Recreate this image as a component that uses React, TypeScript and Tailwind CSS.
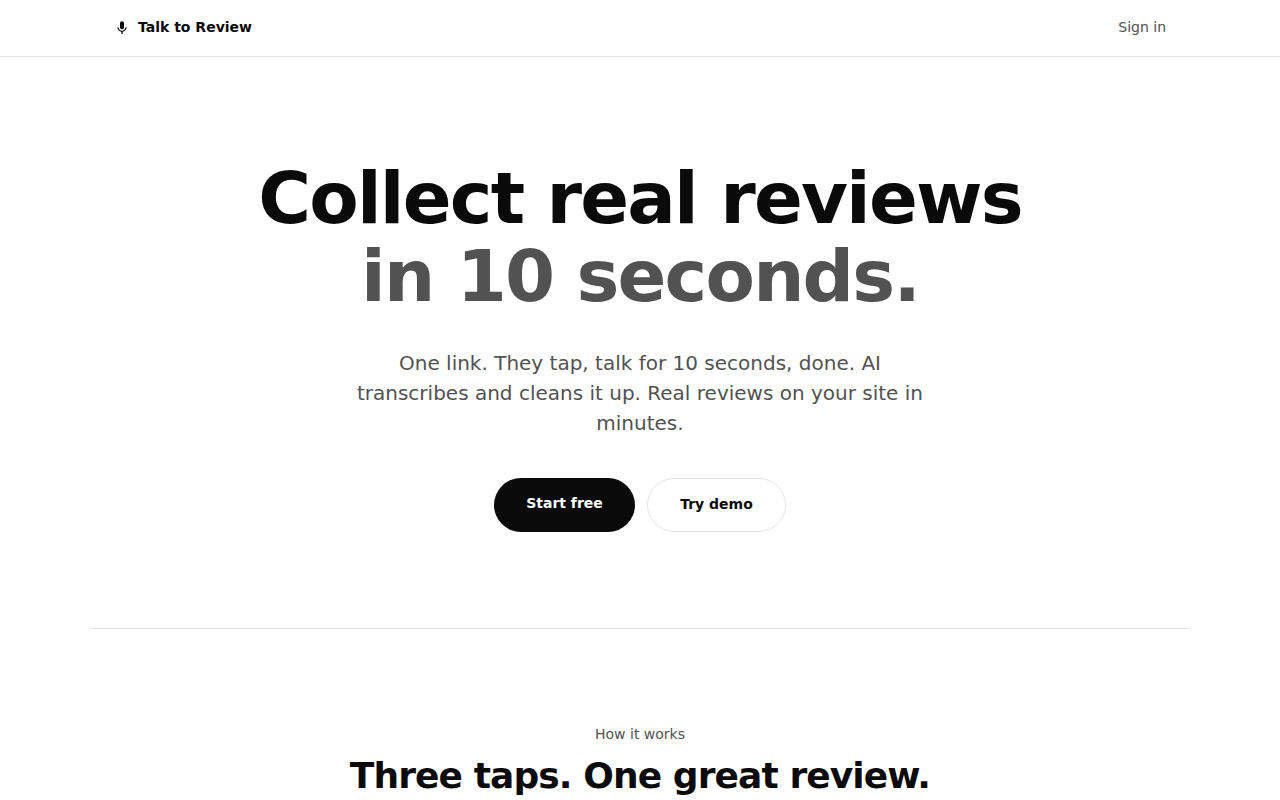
export default function App() {
  return (
    <div className="bg-white font-['DejaVu_Sans',sans-serif] text-[#0a0a0a] overflow-hidden h-[800px]">
      {/* Nav */}
      <header className="border-b border-[#e5e5e5] h-[57px]">
        <div className="mx-auto max-w-[1100px] h-[54px] px-6 flex items-center justify-between">
          <div className="flex items-center gap-2">
            <svg viewBox="0 0 24 24" className="w-4 h-4 mt-[2px] text-[#0a0a0a]" fill="currentColor">
              <path d="M12 14c1.66 0 3-1.34 3-3V5c0-1.66-1.34-3-3-3S9 3.34 9 5v6c0 1.66 1.34 3 3 3zm5.3-3c0 3-2.54 5.1-5.3 5.1S6.7 14 6.7 11H5c0 3.41 2.72 6.23 6 6.72V21h2v-3.28c3.28-.48 6-3.3 6-6.72h-1.7z" />
            </svg>
            <span className="text-sm font-bold">Talk to Review</span>
          </div>
          <a className="text-sm text-[#525252]">Sign in</a>
        </div>
      </header>

      {/* Hero */}
      <section className="mx-auto max-w-[1100px] px-6 pt-[102px] pb-24 flex flex-col items-center text-center">
        <h1 className="text-[72px] leading-[78px] font-bold tracking-[-0.025em]">
          Collect real reviews
          <br />
          <span className="text-[#525252]">in 10 seconds.</span>
        </h1>
        <p className="mt-[33px] max-w-xl text-xl leading-[30px] text-[#525252]">
          One link. They tap, talk for 10 seconds, done. AI transcribes and cleans it up. Real reviews on your site in minutes.
        </p>
        <div className="mt-10 flex items-center gap-3">
          <button className="h-[54px] w-[141px] rounded-full bg-[#0a0a0a] text-white text-sm font-bold pb-1">Start free</button>
          <button className="h-[54px] w-[139px] rounded-full border border-[#e5e5e5] bg-white text-sm font-bold pb-0.5">Try demo</button>
        </div>
      </section>

      <div className="mx-auto max-w-[1100px] border-t border-[#e5e5e5]" />

      {/* How it works */}
      <section className="pt-[95px] flex flex-col items-center text-center">
        <p className="text-sm text-[#525252]">How it works</p>
        <h2 className="mt-3 text-4xl font-bold tracking-tight">Three taps. One great review.</h2>
      </section>
    </div>
  );
}
